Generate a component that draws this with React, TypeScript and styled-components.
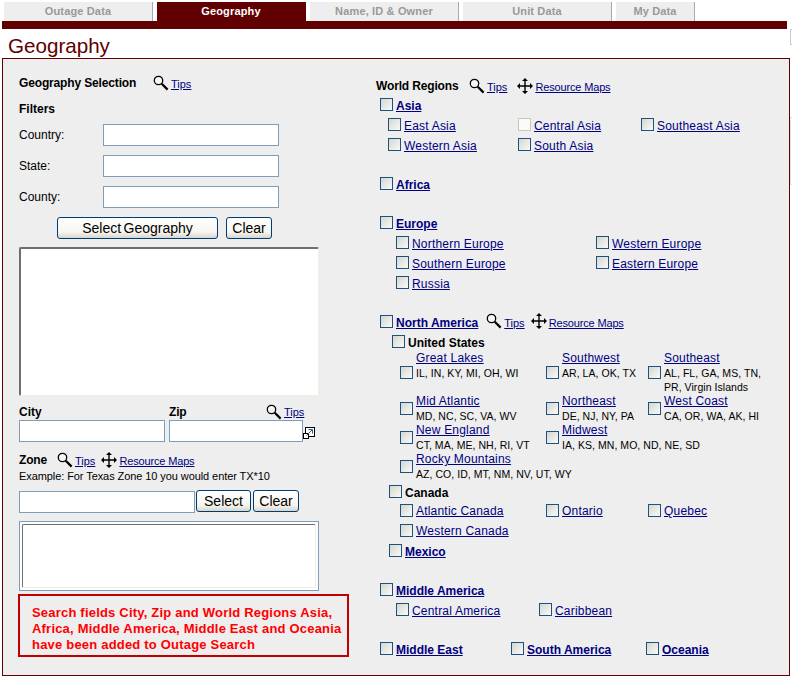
import React from "react";
import styled, { createGlobalStyle } from "styled-components";

const GlobalStyle = createGlobalStyle`
  html, body {
    margin: 0;
    padding: 0;
    background: #fff;
    font-family: "Liberation Sans", Arial, sans-serif;
    font-size: 12px;
    color: #000;
  }
`;

const Page = styled.div`
  width: 792px;
  height: 678px;
  padding-top: 2px;
  box-sizing: border-box;
  overflow: hidden;
  position: relative;
`;

// cut-off bits of something wider than the window, at its right edge
const EdgeScrap = styled.div<{ $top: number; $height: number; $color: string }>`
  position: absolute;
  left: 790px;
  top: ${(p) => p.$top}px;
  width: 10px;
  height: ${(p) => p.$height}px;
  box-sizing: border-box;
  border: 1px solid ${(p) => p.$color};
`;

const TabRow = styled.div`
  display: flex;
  gap: 4px;
  margin-left: 4px;
  height: 19px;
`;

const Tab = styled.a<{ $active?: boolean; $width?: number }>`
  width: ${(p) => p.$width ?? 149}px;
  box-sizing: border-box;
  text-align: center;
  font-size: 11px;
  font-weight: 700;
  letter-spacing: 0.15px;
  line-height: 18px;
  background: ${(p) => (p.$active ? "#600000" : "#eeeeee")};
  color: ${(p) => (p.$active ? "#ffffff" : "#999999")};
  border-right: 1px solid ${(p) => (p.$active ? "#600000" : "#aaaaaa")};
`;

const TabBar = styled.div`
  height: 8px;
  width: 785px;
  margin-left: 2px;
  background: #600000;
`;

const PageTitle = styled.h1`
  margin: 0 0 0 8px;
  height: 29px;
  font-size: 20.6px;
  font-weight: 400;
  line-height: 34px;
  color: #600000;
`;

const Panel = styled.div`
  display: grid;
  grid-template-columns: 373px 1fr;
  width: 788px;
  height: 618px;
  margin-left: 2px;
  box-sizing: border-box;
  border: 1px solid #600000;
  background: #eeeeee;
`;

const LeftColumn = styled.div`
  padding: 15px 0 0 16px;
`;

const RightColumn = styled.div`
  padding-top: 18px;
`;

const Heading = styled.div<{ $top?: number }>`
  display: flex;
  align-items: center;
  height: 18px;
  margin-top: ${(p) => p.$top ?? 0}px;
  font-weight: 700;
`;

const HeadingText = styled.span<{ $width?: number }>`
  width: ${(p) => (p.$width ? `${p.$width}px` : "auto")};
  letter-spacing: -0.15px;
`;

const Tool = styled.span<{ $left?: number }>`
  display: inline-flex;
  align-items: center;
  height: 18px;
  margin-left: ${(p) => p.$left ?? 0}px;
  font-weight: 400;
  font-size: 11px;
`;

const ToolLink = styled.a<{ $long?: boolean }>`
  margin: 1px 0 0 2px;
  color: #000080;
  text-decoration: underline;
  letter-spacing: ${(p) => (p.$long ? -0.15 : 0)}px;
`;

const FieldStack = styled.div`
  display: flex;
  flex-direction: column;
  gap: 9px;
  margin-top: 6px;
`;

const Field = styled.label`
  display: flex;
  align-items: center;
  height: 22px;
`;

const FieldName = styled.span`
  width: 84px;
`;

const TextInput = styled.input<{ $width: number }>`
  width: ${(p) => p.$width}px;
  height: 22px;
  padding: 0 2px;
  box-sizing: border-box;
  border: 1px solid #7f9db9;
  background: #fff;
  display: block;
`;

const ButtonRow = styled.div<{ $left?: number; $gap: number; $top?: number }>`
  display: flex;
  gap: ${(p) => p.$gap}px;
  margin-left: ${(p) => p.$left ?? 0}px;
  margin-top: ${(p) => p.$top ?? 0}px;
`;

const Button = styled.button<{ $width: number }>`
  width: ${(p) => p.$width}px;
  height: 22px;
  padding: 0;
  box-sizing: border-box;
  border: 1px solid #003c74;
  border-radius: 3px;
  background: linear-gradient(#ffffff 0%, #f6f5f0 70%, #d8d6cc 100%);
  font-family: "Liberation Sans", Arial, sans-serif;
  font-size: 14px;
  word-spacing: -1.5px;
  color: #000;
`;

const ListBox = styled.select`
  display: block;
  width: 300px;
  height: 149px;
  margin-top: 8px;
  box-sizing: border-box;
  border-style: solid;
  border-width: 2px 1px 1px 2px;
  border-color: #6e6e6e #f1efe2 #f1efe2 #6e6e6e;
  background: #fff;
  outline: none;
`;

const FramedList = styled.div`
  width: 300px;
  height: 70px;
  margin-top: 8px;
  box-sizing: border-box;
  padding: 2px;
  border: 1px solid #7f9db9;
  background: #fff;
`;

const FramedSelect = styled.select`
  display: block;
  width: 294px;
  height: 64px;
  box-sizing: border-box;
  border-style: solid;
  border-width: 1px;
  border-color: #6e6e6e #f1efe2 #f1efe2 #6e6e6e;
  background: #fff;
  outline: none;
`;

const PlaceGrid = styled.div`
  display: grid;
  grid-template-columns: 150px 1fr;
  margin-top: 7px;
`;

const PlaceLabel = styled.div`
  display: flex;
  align-items: center;
  height: 17px;
  font-weight: 700;
`;

const PopupRow = styled.div`
  display: flex;
  align-items: center;

  svg {
    margin-top: 4px;
  }
`;

const ExampleText = styled.div`
  height: 13px;
  line-height: 14px;
  font-size: 11px;
  letter-spacing: -0.08px;
`;

const ZoneRow = styled.div`
  display: flex;
  align-items: flex-start;
  margin-top: 9px;
  gap: 1px;
`;

const Notice = styled.div`
  width: 331px;
  height: 63px;
  margin: 3px 0 0 -1px;
  padding: 9px 0 0 12px;
  box-sizing: border-box;
  border: 2px solid #c00000;
  color: #ff0000;
  font-weight: 700;
  font-size: 13px;
  line-height: 16px;
  letter-spacing: 0.2px;
  white-space: nowrap;
`;

const Group = styled.div`
  margin-bottom: 19px;
`;

const Row = styled.div<{ $indent?: number }>`
  display: flex;
  align-items: flex-start;
  height: 20px;
  padding-left: ${(p) => p.$indent ?? 0}px;

  ${ToolLink} {
    margin-top: 4px;
  }
`;

const Item = styled.label<{ $width?: number; $top?: number; $tight?: boolean }>`
  display: inline-flex;
  align-items: flex-start;
  line-height: ${(p) => (p.$tight ? 14 : 16)}px;
  padding-top: ${(p) => p.$top ?? 3}px;
  width: ${(p) => (p.$width ? `${p.$width}px` : "auto")};
`;

const Check = styled.input.attrs({ type: "checkbox" })`
  appearance: none;
  flex: none;
  width: 13px;
  height: 13px;
  margin: 0 3px 0 0;
  box-sizing: border-box;
  border: 1px solid #1c5180;
  background: linear-gradient(135deg, #d6d6d0 0%, #f6f6f3 90%);

  &:disabled {
    border-color: #cac8bb;
    background: #fbfbf7;
  }
`;

const RegionLink = styled.a<{ $strong?: boolean }>`
  color: #000080;
  text-decoration: underline;
  font-weight: ${(p) => (p.$strong ? 700 : 400)};
  letter-spacing: ${(p) => (p.$strong ? 0 : 0.2)}px;
  white-space: nowrap;
`;

const PlainName = styled.span`
  font-weight: 700;
`;

const SubGrid = styled.div`
  display: grid;
  grid-template-columns: 146px 102px 1fr;
  padding-left: 24px;
  margin-top: -1px;
`;

const SubCell = styled.div<{ $span?: number }>`
  display: flex;
  align-items: flex-start;
  grid-column: span ${(p) => p.$span ?? 1};
`;

const SubCheck = styled(Check)`
  align-self: center;
`;

const SubTitle = styled(RegionLink)`
  display: block;
  line-height: 15px;
  width: fit-content;
`;

const SubText = styled.div`
  font-size: 10.5px;
  line-height: 14px;
  letter-spacing: 0.05px;
  white-space: pre-line;
`;

const MagnifierIcon = () => (
  <svg width="16" height="16" viewBox="0 0 16 16" aria-hidden="true">
    <circle cx="5.5" cy="5.5" r="4.2" fill="#f6f6f6" stroke="#000" strokeWidth="1.3" />
    <path d="M8.8 8.8 L14.6 14.6" stroke="#000" strokeWidth="2.2" fill="none" />
  </svg>
);

const MoveIcon = () => (
  <svg width="16" height="16" viewBox="0 0 16 16" aria-hidden="true">
    <path d="M8 1v14M1 8h14" stroke="#000" strokeWidth="1.4" fill="none" />
    <path d="M8 0l3 3H5zM8 16l-3-3h6zM0 8l3-3v6zM16 8l-3 3V5z" fill="#000" />
  </svg>
);

const PopupIcon = () => (
  <svg width="12" height="12" viewBox="0 0 12 12" aria-hidden="true">
    <rect x="2.5" y="0.5" width="9" height="9" fill="#fff" stroke="#000" />
    <rect x="0.5" y="6.5" width="5" height="5" fill="#fff" stroke="#000" />
    <path d="M3.5 8.5L9 3M5.5 2.5h4V6.5" stroke="#35597c" fill="none" />
  </svg>
);

const Tips = ({ left }: { left?: number }) => (
  <Tool $left={left}>
    <MagnifierIcon />
    <ToolLink>Tips</ToolLink>
  </Tool>
);

const Maps = ({ left }: { left?: number }) => (
  <Tool $left={left}>
    <MoveIcon />
    <ToolLink $long>Resource Maps</ToolLink>
  </Tool>
);

type Place = { name: string; states: string; span?: number };

const usRegions: Place[] = [
  { name: "Great Lakes", states: "IL, IN, KY, MI, OH, WI" },
  { name: "Southwest", states: "AR, LA, OK, TX" },
  { name: "Southeast", states: "AL, FL, GA, MS, TN,\nPR, Virgin Islands" },
  { name: "Mid Atlantic", states: "MD, NC, SC, VA, WV" },
  { name: "Northeast", states: "DE, NJ, NY, PA" },
  { name: "West Coast", states: "CA, OR, WA, AK, HI" },
  { name: "New England", states: "CT, MA, ME, NH, RI, VT" },
  { name: "Midwest", states: "IA, KS, MN, MO, ND, NE, SD", span: 2 },
  { name: "Rocky Mountains", states: "AZ, CO, ID, MT, NM, NV, UT, WY", span: 3 },
];

const App: React.FC = () => {
  return (
    <Page>
      <GlobalStyle />
      <EdgeScrap $top={29} $height={16} $color="#cccccc" />
      <EdgeScrap $top={117} $height={68} $color="#e4e4e4" />
      <TabRow>
        <Tab>Outage Data</Tab>
        <Tab $active>Geography</Tab>
        <Tab>Name, ID &amp; Owner</Tab>
        <Tab>Unit Data</Tab>
        <Tab $width={79}>My Data</Tab>
      </TabRow>
      <TabBar />
      <PageTitle>Geography</PageTitle>
      <Panel>
        <LeftColumn>
          <Heading>
            <HeadingText $width={134}>Geography Selection</HeadingText>
            <Tips />
          </Heading>
          <Heading $top={8}>Filters</Heading>
          <FieldStack>
            <Field>
              <FieldName>Country:</FieldName>
              <TextInput $width={176} />
            </Field>
            <Field>
              <FieldName>State:</FieldName>
              <TextInput $width={176} />
            </Field>
            <Field>
              <FieldName>County:</FieldName>
              <TextInput $width={176} />
            </Field>
          </FieldStack>
          <ButtonRow $left={38} $gap={8} $top={9}>
            <Button $width={161}>Select Geography</Button>
            <Button $width={46}>Clear</Button>
          </ButtonRow>
          <ListBox multiple />
          <PlaceGrid>
            <PlaceLabel>City</PlaceLabel>
            <PlaceLabel>
              <HeadingText $width={97}>Zip</HeadingText>
              <Tips />
            </PlaceLabel>
            <TextInput $width={146} />
            <PopupRow>
              <TextInput $width={134} />
              <PopupIcon />
            </PopupRow>
          </PlaceGrid>
          <Heading $top={9}>
            <HeadingText $width={38}>Zone</HeadingText>
            <Tips />
            <Maps left={6} />
          </Heading>
          <ExampleText>Example: For Texas Zone 10 you would enter TX*10</ExampleText>
          <ZoneRow>
            <TextInput $width={176} />
            <ButtonRow $gap={2} $top={-1}>
              <Button $width={55}>Select</Button>
              <Button $width={46}>Clear</Button>
            </ButtonRow>
          </ZoneRow>
          <FramedList>
            <FramedSelect multiple />
          </FramedList>
          <Notice>
            Search fields City, Zip and World Regions Asia,
            <br />
            Africa, Middle America, Middle East and Oceania
            <br />
            have been added to Outage Search
          </Notice>
        </LeftColumn>

        <RightColumn>
          <Heading>
            <HeadingText $width={93}>World Regions</HeadingText>
            <Tips />
            <Maps left={10} />
          </Heading>

          <Group>
            <Row $indent={4}>
              <Item>
                <Check />
                <RegionLink $strong>Asia</RegionLink>
              </Item>
            </Row>
            <Row $indent={12}>
              <Item $width={130}>
                <Check />
                <RegionLink>East Asia</RegionLink>
              </Item>
              <Item $width={123}>
                <Check disabled />
                <RegionLink>Central Asia</RegionLink>
              </Item>
              <Item>
                <Check />
                <RegionLink>Southeast Asia</RegionLink>
              </Item>
            </Row>
            <Row $indent={12}>
              <Item $width={130}>
                <Check />
                <RegionLink>Western Asia</RegionLink>
              </Item>
              <Item>
                <Check />
                <RegionLink>South Asia</RegionLink>
              </Item>
            </Row>
          </Group>

          <Group>
            <Row $indent={4}>
              <Item>
                <Check />
                <RegionLink $strong>Africa</RegionLink>
              </Item>
            </Row>
          </Group>

          <Group>
            <Row $indent={4}>
              <Item>
                <Check />
                <RegionLink $strong>Europe</RegionLink>
              </Item>
            </Row>
            <Row $indent={20}>
              <Item $width={200}>
                <Check />
                <RegionLink>Northern Europe</RegionLink>
              </Item>
              <Item>
                <Check />
                <RegionLink>Western Europe</RegionLink>
              </Item>
            </Row>
            <Row $indent={20}>
              <Item $width={200}>
                <Check />
                <RegionLink>Southern Europe</RegionLink>
              </Item>
              <Item>
                <Check />
                <RegionLink>Eastern Europe</RegionLink>
              </Item>
            </Row>
            <Row $indent={20}>
              <Item>
                <Check />
                <RegionLink>Russia</RegionLink>
              </Item>
            </Row>
          </Group>

          <Group>
            <Row $indent={4}>
              <Item>
                <Check />
                <RegionLink $strong>North America</RegionLink>
              </Item>
              <Tips left={8} />
              <Maps left={6} />
            </Row>
            <Row $indent={16}>
              <Item>
                <Check />
                <PlainName>United States</PlainName>
              </Item>
            </Row>
            <SubGrid>
              {usRegions.map((region) => (
                <SubCell key={region.name} $span={region.span}>
                  <SubCheck />
                  <div>
                    <SubTitle>{region.name}</SubTitle>
                    <SubText>{region.states}</SubText>
                  </div>
                </SubCell>
              ))}
            </SubGrid>
            <Row $indent={13}>
              <Item $top={4}>
                <Check />
                <PlainName>Canada</PlainName>
              </Item>
            </Row>
            <Row $indent={24}>
              <Item $width={146} $tight>
                <Check />
                <RegionLink>Atlantic Canada</RegionLink>
              </Item>
              <Item $width={102} $tight>
                <Check />
                <RegionLink>Ontario</RegionLink>
              </Item>
              <Item $tight>
                <Check />
                <RegionLink>Quebec</RegionLink>
              </Item>
            </Row>
            <Row $indent={24}>
              <Item $tight>
                <Check />
                <RegionLink>Western Canada</RegionLink>
              </Item>
            </Row>
            <Row $indent={13}>
              <Item>
                <Check />
                <RegionLink $strong>Mexico</RegionLink>
              </Item>
            </Row>
          </Group>

          <Group>
            <Row $indent={4}>
              <Item>
                <Check />
                <RegionLink $strong>Middle America</RegionLink>
              </Item>
            </Row>
            <Row $indent={20}>
              <Item $width={143}>
                <Check />
                <RegionLink>Central America</RegionLink>
              </Item>
              <Item>
                <Check />
                <RegionLink>Caribbean</RegionLink>
              </Item>
            </Row>
          </Group>

          <Row $indent={4}>
            <Item $width={131}>
              <Check />
              <RegionLink $strong>Middle East</RegionLink>
            </Item>
            <Item $width={135}>
              <Check />
              <RegionLink $strong>South America</RegionLink>
            </Item>
            <Item>
              <Check />
              <RegionLink $strong>Oceania</RegionLink>
            </Item>
          </Row>
        </RightColumn>
      </Panel>
    </Page>
  );
};

export default App;
